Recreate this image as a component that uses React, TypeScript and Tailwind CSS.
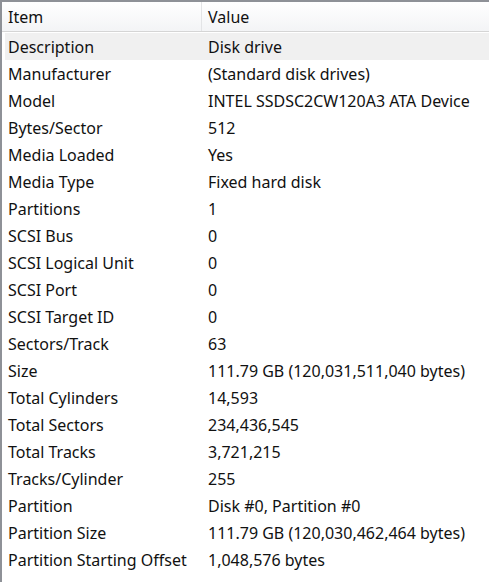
const ROWS: [string, string][] = [
  ["Description", "Disk drive"],
  ["Manufacturer", "(Standard disk drives)"],
  ["Model", "INTEL SSDSC2CW120A3 ATA Device"],
  ["Bytes/Sector", "512"],
  ["Media Loaded", "Yes"],
  ["Media Type", "Fixed hard disk"],
  ["Partitions", "1"],
  ["SCSI Bus", "0"],
  ["SCSI Logical Unit", "0"],
  ["SCSI Port", "0"],
  ["SCSI Target ID", "0"],
  ["Sectors/Track", "63"],
  ["Size", "111.79 GB (120,031,511,040 bytes)"],
  ["Total Cylinders", "14,593"],
  ["Total Sectors", "234,436,545"],
  ["Total Tracks", "3,721,215"],
  ["Tracks/Cylinder", "255"],
  ["Partition", "Disk #0, Partition #0"],
  ["Partition Size", "111.79 GB (120,030,462,464 bytes)"],
  ["Partition Starting Offset", "1,048,576 bytes"],
];

export default function App() {
  return (
    <div
      className="w-[489px] h-[582px] overflow-hidden bg-white border-t-2 border-l-2 border-[#8e9197] text-[16px] text-[#111]"
      style={{ fontFamily: '"Noto Sans", "Open Sans", sans-serif' }}
    >
      <div className="flex h-[30px] border-b border-[#d5d5d5] bg-gradient-to-b from-white to-[#f3f4f6]">
        <div className="w-[200px] pl-[6px] flex items-center border-r border-[#e3e4e6]">Item</div>
        <div className="flex-1 pl-[6px] flex items-center">Value</div>
      </div>
      <div className="ml-[3px] pt-[1px]">
        {ROWS.map(([item, value], i) => (
          <div
            key={item}
            className={`grid grid-cols-[197px_1fr] h-[27px] items-center whitespace-nowrap ${i === 0 ? "bg-[#f0f0f0]" : ""}`}
          >
            <span className="pl-[3px]">{item}</span>
            <span className="pl-[6px]">{value}</span>
          </div>
        ))}
      </div>
    </div>
  );
}
